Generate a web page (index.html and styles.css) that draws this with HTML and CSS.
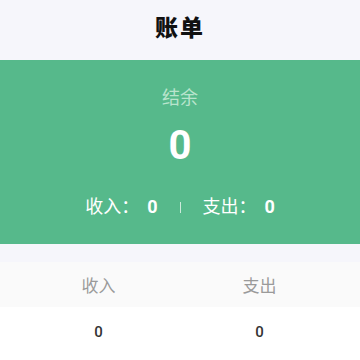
FILE: index.html
```html
<!DOCTYPE html>
<html lang="zh-CN">
<head>
  <meta charset="UTF-8">
  <meta name="viewport" content="width=device-width, initial-scale=1.0">
  <title>账单</title>
  <link rel="stylesheet" href="styles.css">
</head>
<body>
  <div class="page">
    <div class="header">账单</div>
    <div class="summary">
      <div class="summary-label">结余</div>
      <div class="summary-balance">0</div>
      <div class="summary-detail">
        <span>收入：<b>0</b></span>
        <span class="divider"></span>
        <span>支出：<b>0</b></span>
      </div>
    </div>
    <div class="table">
      <div class="table-head">
        <div class="cell">收入</div>
        <div class="cell">支出</div>
      </div>
      <div class="table-row">
        <div class="cell">0</div>
        <div class="cell">0</div>
      </div>
    </div>
  </div>
</body>
</html>
```

FILE: styles.css
```css
html, body {
  margin: 0;
  padding: 0;
  background-color: #f6f6fb;
  font-family: Roboto, "Noto Sans CJK SC", sans-serif;
}

.page {
  width: 360px;
  height: 360px;
  overflow: hidden;
}

.header {
  height: 60px;
  box-sizing: border-box;
  padding-bottom: 8px;
  display: flex;
  justify-content: center;
  align-items: center;
  font-size: 23px;
  font-weight: 900;
  letter-spacing: 2px;
  color: #111;
}

.summary {
  background-color: #56b98b;
  height: 184px;
  display: flex;
  flex-direction: column;
  align-items: center;
  color: #fff;
}

.summary-label {
  margin-top: 26px;
  font-size: 18px;
  line-height: 24px;
  color: #b9e4cd;
}

.summary-balance {
  margin-top: 11px;
  font-size: 40px;
  font-weight: bold;
  line-height: 50px;
}

.summary-detail {
  margin-top: 24px;
  display: flex;
  align-items: center;
  gap: 22px;
  font-size: 18px;
  line-height: 24px;
}

.summary-detail b {
  margin-left: 8px;
}

.divider {
  width: 1px;
  height: 11px;
  background-color: #cdeadb;
}

.table {
  margin-top: 18px;
  background-color: #fff;
}

.table-head,
.table-row {
  display: grid;
  grid-template-columns: 161px 161px;
  padding-left: 18px;
}

.table-head {
  height: 45px;
  background-color: #fafafa;
  color: #9a9a9a;
  font-size: 17px;
}

.table-row {
  height: 60px;
  padding-bottom: 10px;
  box-sizing: border-box;
  color: #333;
  font-size: 15px;
  font-weight: 500;
}

.cell {
  display: flex;
  justify-content: center;
  align-items: center;
}
```
